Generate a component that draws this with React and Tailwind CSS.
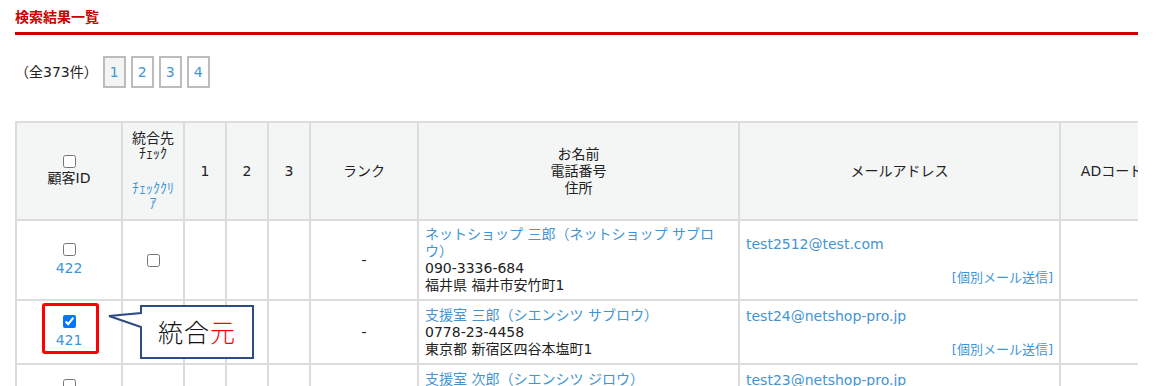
import React from "react";

const rows = [
    {
        id: 422,
        checked: false,
        name: "ネットショップ 三郎（ネットショップ サブロウ）",
        tel: "090-3336-684",
        addr: "福井県 福井市安竹町1",
        mail: "test2512@test.com",
        h: "h-[80px]",
    },
    {
        id: 421,
        checked: true,
        name: "支援室 三郎（シエンシツ サブロウ）",
        tel: "0778-23-4458",
        addr: "東京都 新宿区四谷本塩町1",
        mail: "test24@netshop-pro.jp",
        h: "h-[64px]",
    },
    {
        id: 420,
        checked: false,
        name: "支援室 次郎（シエンシツ ジロウ）",
        tel: "0778-23-4457",
        addr: "東京都 新宿区四谷本塩町2",
        mail: "test23@netshop-pro.jp",
        h: "h-[64px]",
    },
];

const cell = "border-2 border-[#dcdcdc] align-middle";

const App = () => {
    return (
        <div className="relative min-h-[386px] bg-white pl-[15px] font-['DejaVu_Sans','Noto_Sans_CJK_JP',sans-serif] text-[14px] text-[#222]">
            <div className="w-[1123px] overflow-hidden">
                <div className="border-b-[3px] border-[#cc0000] pt-[8px] pb-[6px] text-[14px] font-bold leading-[18px] text-[#cc0000]">
                    検索結果一覧
                </div>

                <div className="mt-[21px] flex items-center">
                    <span className="leading-[18px]">（全373件）</span>
                    <div className="ml-[5px] flex gap-[5px]">
                        {[1, 2, 3, 4].map((n) => (
                            <span
                                key={n}
                                className={`flex h-[32px] w-[23px] items-center justify-center border-2 border-[#bcbcbc] text-[#3f95d6] ${n === 1 ? "bg-[#f3f4f4]" : "bg-white"}`}
                            >
                                {n}
                            </span>
                        ))}
                    </div>
                </div>

                <table className="mt-[33px] w-[1148px] table-fixed border-collapse leading-[17px]">
                    <colgroup>
                        <col className="w-[106px]" />
                        <col className="w-[62px]" />
                        <col className="w-[42px]" />
                        <col className="w-[42px]" />
                        <col className="w-[42px]" />
                        <col className="w-[108px]" />
                        <col className="w-[321px]" />
                        <col className="w-[321px]" />
                        <col className="w-[104px]" />
                    </colgroup>
                    <thead>
                        <tr className="h-[98px] bg-[#f4f5f5] text-center font-normal">
                            <th className={`${cell} font-normal`}>
                                <div className="flex flex-col items-center">
                                    <input type="checkbox" className="m-0 h-[13px] w-[13px]" />
                                    <span className="mt-[2px]">顧客ID</span>
                                </div>
                            </th>
                            <th className={`${cell} font-normal leading-[15px]`}>
                                <div>統合先</div>
                                <div>ﾁｪｯｸ</div>
                                <div className="mt-[20px] text-[#3f95d6]">
                                    ﾁｪｯｸｸﾘ
                                    <br />
                                    ｱ
                                </div>
                            </th>
                            <th className={`${cell} font-normal`}>1</th>
                            <th className={`${cell} font-normal`}>2</th>
                            <th className={`${cell} font-normal`}>3</th>
                            <th className={`${cell} font-normal`}>ランク</th>
                            <th className={`${cell} font-normal`}>
                                お名前
                                <br />
                                電話番号
                                <br />
                                住所
                            </th>
                            <th className={`${cell} font-normal`}>メールアドレス</th>
                            <th className={`${cell} font-normal`}>ADコード</th>
                        </tr>
                    </thead>
                    <tbody>
                        {rows.map((r) => (
                            <tr key={r.id} className={r.h}>
                                <td className={`${cell} text-center`}>
                                    <div className="flex flex-col items-center">
                                        <input
                                            type="checkbox"
                                            defaultChecked={r.checked}
                                            className="m-0 h-[13px] w-[13px]"
                                        />
                                        <span className="mt-[4px] text-[#3f95d6]">{r.id}</span>
                                    </div>
                                </td>
                                <td className={`${cell} text-center`}>
                                    {!r.checked && (
                                        <input type="checkbox" className="m-0 h-[13px] w-[13px] align-middle" />
                                    )}
                                </td>
                                <td className={cell}></td>
                                <td className={cell}></td>
                                <td className={cell}></td>
                                <td className={`${cell} text-center`}>-</td>
                                <td className={`${cell} px-[6px] py-[5px]`}>
                                    <div className="text-[#3f95d6]">{r.name}</div>
                                    <div>{r.tel}</div>
                                    <div>{r.addr}</div>
                                </td>
                                <td className={`${cell} px-[6px]`}>
                                    <div className="text-[#3f95d6]">{r.mail}</div>
                                    <div className="mt-[17px] text-right text-[13px] leading-[15px] text-[#3f95d6]">
                                        [個別メール送信]
                                    </div>
                                </td>
                                <td className={cell}></td>
                            </tr>
                        ))}
                    </tbody>
                </table>
            </div>

            {/* 統合元 marker */}
            <div className="absolute left-[42px] top-[303px] h-[51px] w-[57px] rounded-[3px] border-[3px] border-[#ff0000]"></div>
            <div className="absolute left-[105px] top-[302px] h-[60px] w-[152px]">
                <svg width="152" height="60" viewBox="0 0 152 60" className="absolute left-0 top-0">
                    <path
                        d="M36 4 H148 V56 H36 V25 L4 14 L36 11 Z"
                        fill="#ffffff"
                        stroke="#2e4b85"
                        strokeWidth="2"
                    />
                </svg>
                <div className="absolute left-[36px] top-[4px] flex h-[52px] w-[112px] items-center justify-center font-['Noto_Sans_CJK_JP',sans-serif] text-[25px] font-light tracking-[1px] text-[#111]">
                    統合<span className="text-[#ff0000]">元</span>
                </div>
            </div>
        </div>
    );
};

export default App;
